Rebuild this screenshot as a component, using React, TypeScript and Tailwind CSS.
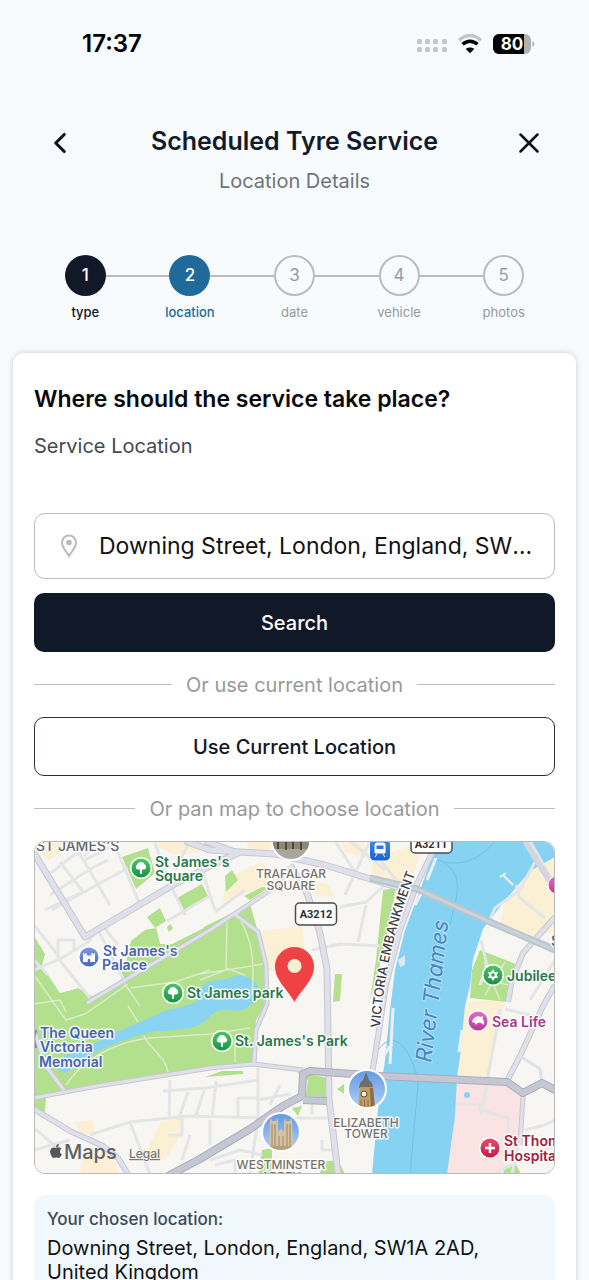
import { useState } from "react";
import { ChevronLeft, X } from "lucide-react";
import { FaApple } from "react-icons/fa";

const steps = ["type", "location", "date", "vehicle", "photos"];
const currentStep = 1;

const StatusBar = () => (
  <div className="flex h-[88px] items-center justify-between pl-[82px] pr-[54px]">
    <span className="text-[24px] font-semibold leading-7 text-black">17:37</span>
    <div className="flex items-center gap-[10px]">
      <svg width="30" height="16" viewBox="0 0 30 16" fill="#c3c5c7" aria-hidden="true">
        {[0, 8, 16, 25].map((x) => (
          <g key={x}>
            <rect x={x} y="3" width="5" height="5" rx="1.5" />
            <rect x={x} y="11" width="5" height="5" rx="1.5" />
          </g>
        ))}
      </svg>
      <svg width="26" height="20" viewBox="0 0 26 20" fill="none" aria-hidden="true">
        <path d="M2 6.2C8.5-.1 17.500-.1 24 6.200" stroke="#c3c5c7" strokeWidth="3.400" />
        <path d="M5.600 10.300C10 6.200 16 6.200 20.400 10.300" stroke="#000" strokeWidth="3.600" />
        <path d="M13 19.300 8.800 14.900C11 12.900 15 12.900 17.200 14.900Z" fill="#000" />
      </svg>
      <svg width="42" height="20" viewBox="0 0 42 20" aria-hidden="true">
        <rect x="0" y="0" width="38" height="20" rx="6" fill="#b0b1b3" />
        <path d="M6 0H31V20H6A6 6 0 0 1 0 14V6A6 6 0 0 1 6 0Z" fill="#000" />
        <path d="M39.500 7C42 8 42 12 39.500 13Z" fill="#b0b1b3" />
        <text x="19" y="16" textAnchor="middle" fill="#fff" fontSize="17" fontWeight="700">80</text>
      </svg>
    </div>
  </div>
);

const Header = () => (
  <header className="flex items-start justify-between px-[43px] pt-[38px]">
    <button type="button" aria-label="Back" className="text-[#0d1320]">
      <ChevronLeft size={34} strokeWidth={2.2} />
    </button>
    <div className="text-center">
      <h1 className="text-[25px] font-semibold leading-[30px] text-[#131a2a]">Scheduled Tyre Service</h1>
      <p className="mt-[13px] text-[20px] leading-6 text-[#6f737b]">Location Details</p>
    </div>
    <button type="button" aria-label="Close" className="text-[#0d1320]">
      <X size={34} strokeWidth={1.8} />
    </button>
  </header>
);

const Stepper = () => (
  <ol className="mx-[33px] mt-[62px] grid grid-cols-5">
    {steps.map((step, i) => {
      const circle =
        i < currentStep
          ? "bg-[#111827] text-white font-medium"
          : i === currentStep
            ? "bg-[#20699b] text-white font-medium"
            : "border-2 border-[#bbbbbd] text-[#98999b]";
      const label =
        i < currentStep ? "text-[#111827] font-medium" : i === currentStep ? "text-[#20699b] font-medium" : "text-[#98999b]";
      return (
        <li key={step} className="flex flex-col items-center">
          <div className="flex w-full items-center">
            <span className={i === 0 ? "h-[2px] flex-1" : "h-[2px] flex-1 bg-[#bbbbbd]"} />
            <span className={`flex size-[41px] items-center justify-center rounded-full text-[17px] ${circle}`}>{i + 1}</span>
            <span className={i === steps.length - 1 ? "h-[2px] flex-1" : "h-[2px] flex-1 bg-[#bbbbbd]"} />
          </div>
          <span className={`mt-[8px] text-[13px] leading-4 ${label}`}>{step}</span>
        </li>
      );
    })}
  </ol>
);

const Divider = ({ children }: { children: string }) => (
  <div className="flex h-[65px] items-center gap-[14px] text-[20px] leading-6 text-[#98999b]">
    <span className="h-px flex-1 bg-[#bcbdbf]" />
    {children}
    <span className="h-px flex-1 bg-[#bcbdbf]" />
  </div>
);

const TreeMarker = ({ x, y }: { x: number; y: number }) => (
  <g transform={`translate(${x} ${y})`}>
    <circle r="11" fill="#fff" />
    <circle r="9.500" fill="url(#poiGreen)" />
    <path d="M-1 5.800V1.500H-3.300A2.600 2.600 0 0 1-4-3.200A4.200 4.200 0 0 1 4-3.200A2.600 2.600 0 0 1 3.300 1.500H1V5.800Z" fill="#fff" />
  </g>
);

const LocationMap = () => (
  <svg
    className="block h-[331px] w-full bg-[#f7f6f3]"
    viewBox="35 842 519 331"
    preserveAspectRatio="xMidYMid slice"
    role="img"
    aria-label="Map of Westminster"
  >
    <defs>
      <linearGradient id="poiGreen" x2="0" y2="1">
        <stop stopColor="#4fc468" />
        <stop offset="1" stopColor="#169344" />
      </linearGradient>
      <linearGradient id="poiBlue" x2="0" y2="1">
        <stop stopColor="#7d9be0" />
        <stop offset="1" stopColor="#4a66bd" />
      </linearGradient>
      <linearGradient id="poiPink" x2="0" y2="1">
        <stop stopColor="#e06cc4" />
        <stop offset="1" stopColor="#b63a98" />
      </linearGradient>
      <linearGradient id="poiRed" x2="0" y2="1">
        <stop stopColor="#ee4a6a" />
        <stop offset="1" stopColor="#c01c48" />
      </linearGradient>
      <linearGradient id="station" x2="0" y2="1">
        <stop stopColor="#3f8df0" />
        <stop offset="1" stopColor="#1c5fd6" />
      </linearGradient>
      <linearGradient id="sky" x2="0" y2="1">
        <stop stopColor="#5f98e2" />
        <stop offset="1" stopColor="#b5d2f5" />
      </linearGradient>
      <path id="embankment" d="M380 1028C384 975 394 925 420 862" />
      <clipPath id="trafalgarClip"><circle cx="291" cy="841" r="18" /></clipPath>
      <clipPath id="towerClip"><circle cx="367" cy="1089" r="18" /></clipPath>
      <clipPath id="abbeyClip"><circle cx="281" cy="1132" r="18" /></clipPath>
    </defs>

    {/* commercial areas */}
    <g fill="#fcf0d4">
      <path d="M34 841H72L58 855 48 860 40 852 34 862ZM150 841H215L205 850 180 856 160 848ZM262 931 302 926 306 965 265 972ZM227 878 262 862 278 880 240 896 222 902ZM245 841H275L268 852 250 850ZM310 880 330 885 334 896 315 897ZM340 841H365V858L345 852ZM372 860 392 852 425 841 412 878 398 892 372 880ZM75 1122 93 1120 95 1135 80 1133ZM160 1122 185 1117 180 1135 165 1160 145 1155 152 1140ZM83 1155 110 1150 120 1174H80Z" />
      <path d="M530 868 555 854V930L530 940 500 924 505 903ZM465 1002 505 1000 497 1040 488 1076 458 1076Z" />
    </g>

    {/* hospital grounds */}
    <path d="M457 1080H508L522 1095 519 1140 500 1174H447Z" fill="#fae4e3" />

    {/* parks */}
    <g fill="#b3e08d">
      <path d="M34 936 45 954 42 966 60 993 78 988 92 996 122 981 131 941 145 930 156 928 160 940 175 942 210 924 250 904 258 932 265 952 266 1004 256 1020 252 1062 210 1068 120 1082 46 1097 45 1112 34 1108Z" />
      <path d="M122 857 148 848 155 873 136 889ZM147 917 160 908 166 921 155 928ZM177 898 202 884 208 896 184 910ZM225 876 232 870 238 880 226 892ZM262 887 268 888 250 900 244 896ZM335 974 342 974 340 1001 333 1002ZM383 890 396 888 390 920 384 950 370 1000 376 960Z" />
      <path d="M297 1072 328 1078 326 1097 306 1096 308 1080ZM222 1071H243V1074L205 1077ZM337 1089 344 1084V1094ZM262 1150 272 1148 272 1174H258ZM292 1108 302 1106 298 1116ZM322 1162 338 1160 345 1174H320ZM480 950 518 965 508 1002 470 998 472 970ZM505 1166 515 1162 521 1174H503Z" />
    </g>
    {/* lawns and buildings cut out of the palace gardens */}
    <path d="M92 996 122 981 160 960 205 936 210 924 175 942 131 965Z" fill="#b3e08d" />
    <path d="M78 950 100 935 118 962 122 981 92 996 78 988 60 993 45 966ZM157 930 163 925 168 934 180 927 186 920 200 922 204 928 172 944 160 944Z" fill="#f7f6f3" />
    <path d="M167 927 170 924 173 928 169 932Z" fill="#b3e08d" />

    {/* water */}
    <path d="M58 1071 64 1056 90 1046 112 1034 140 1022 165 1011 195 1003C200 998 200 985 207 983 215 978 222 982 232 977 240 974 250 977 256 983 262 992 256 1002 246 1008 236 1014 226 1008 217 1011 208 1016 207 1024 190 1028L165 1031C150 1030 135 1037 125 1040L105 1048 90 1055 66 1073Z" fill="#8ad3f3" />
    <path d="M438 841H555V857L530 871 503 903 483 929 473 959 470 986 465 1006 460 1056 457 1078 455 1116 447 1174H372L378 1110 385 1060 390 1010 395 970 405 930 420 890Z" fill="#86d2f2" />
    <g fill="none" stroke="#74c1e4" strokeWidth="1">
      <path d="M437 860C460 868 480 860 495 841M440 860C468 875 455 900 450 925M378 1050C400 1020 418 1070 418 1085L410 1174" />
    </g>
    <circle cx="467" cy="1095" r="3" fill="#8ad3f3" />

    {/* piers */}
    <g fill="none" stroke="#edf1f4" strokeWidth="3">
      <path d="M436 858 427 880M423 890 415 905M393 1008 390 1064M384 1055 392 1044M462 1030 459 1052" />
      <path d="M500 877 506 873M503 875 513 885" strokeWidth="2" />
    </g>
    <path d="M398 960 405 955V965L400 967Z" fill="#dfe8ec" />

    {/* footpaths inside the parks */}
    <g fill="none" stroke="#dcebcb" strokeWidth="1.500">
      <path d="M227 918 226 970 200 980M226 968 245 975M240 920C252 940 255 960 252 995M200 974 226 970 263 964M34 975 66 1020 85 1014 128 984M34 1004 60 1000 66 1012M130 988 175 982 210 970M122 980 140 1006M128 1006 138 1022M144 1036C150 1050 165 1055 168 1072M66 1085C90 1050 130 1040 150 1038L210 1034 250 1028M235 1045V1062M480 980 510 985M484 962 500 1000M505 962 485 995" />
    </g>

    {/* minor streets */}
    <g fill="none" stroke="#e3e5e7" strokeWidth="3" strokeLinejoin="round">
      <path d="M44 878 78 852M50 895 92 868M52 910 100 883M72 841 110 905M98 841 84 856M60 862 84 893M92 868 108 860M100 883 128 868M110 905 104 895M116 848 140 905M85 860 112 846M45 910 80 893" />
      <path d="M166 875 185 915M190 841 175 870M155 843 166 875M173 883 205 870M200 865 215 910M215 912 245 890M167 921 210 896M34 970 62 958 88 942 98 930M58 958 90 998M98 930 124 980M58 958V940H74V950M103 926 118 945M34 960 48 975M34 925 60 958" />
      <path d="M312 950 340 944 380 946M366 905 358 942M340 907 366 902 385 885M370 841 345 895M335 841 360 880M350 841 385 870M376 855 396 880" />
      <path d="M170 1080 169 1118M90 1135 130 1122 190 1116 262 1118M163 1091 205 1088 258 1080M188 1092 178 1120M205 1088 195 1118M168 1135H182V1118M182 1160 190 1135M34 1128 60 1150M34 1150 70 1140M130 1122 150 1174M210 1120V1145M216 1081 212 1118M258 1068V1118L250 1174M238 1118V1098H258M258 1100 290 1094M270 1105 280 1085M210 1160 240 1150 262 1155M215 1165 235 1160V1174M262 1118 330 1118M312 1115V1100M322 1140V1150H335" />
      <path d="M481 940 487 965 480 985M489 922 555 946M489 922 495 908 520 890 535 862M516 885 520 898 545 918M530 841 555 885M500 1009 488 1076 481 1115M457 1104H480V1110L508 1118V1150M505 1009 540 1018M525 1130 545 1125 555 1120M520 1138 512 1174M545 1150 555 1145M530 1000 555 960M495 1174 520 1160" />
    </g>

    {/* main roads: casing, then fill */}
    <g fill="none" strokeLinejoin="round">
      <g stroke="#c6c8d3" strokeWidth="7">
        <path d="M34 853 85 937 173 885 210 866 240 852 275 854 325 865 400 888M185 841 210 850 240 852M205 841 235 852M290 865 307 893 320 933 327 969 329 1099 338 1174" />
        <path d="M34 1109 70 1131 103 1146 118 1158 128 1174M438 841 417 884 400 930 386 985 379 1030 372 1074M508 1079 520 1056 543 1006 555 985M508 1002 512 980 523 953 555 917" strokeWidth="6" />
        <path d="M87 1003 127 979 210 930 263 895 285 880M34 1098 97 1086 210 1068 253 1064 303 1070M233 913 258 932 266 965 267 1004 256 1030 254 1064M34 1030 45 1065 64 1090M523 1096 520 1145" strokeWidth="5" />
      </g>
      <g stroke="#dfe0e9" strokeWidth="5">
        <path d="M34 853 85 937 173 885 210 866 240 852 275 854 325 865 400 888M185 841 210 850 240 852M205 841 235 852M290 865 307 893 320 933 327 969 329 1099 338 1174" />
        <path d="M34 1109 70 1131 103 1146 118 1158 128 1174M438 841 417 884 400 930 386 985 379 1030 372 1074M508 1079 520 1056 543 1006 555 985M508 1002 512 980 523 953 555 917" strokeWidth="4" />
        <path d="M87 1003 127 979 210 930 263 895 285 880M34 1098 97 1086 210 1068 253 1064 303 1070M233 913 258 932 266 965 267 1004 256 1030 254 1064M34 1030 45 1065 64 1090M520 1056 540 1069 542 1083M523 1096 520 1145" strokeWidth="3" />
      </g>
      <path d="M370 878 417 889 490 922 555 950" stroke="#b9c6cf" strokeWidth="7" />
      <path d="M370 878 417 889 490 922 555 950" stroke="#cbd3d9" strokeWidth="3" />
      <path d="M525 841 555 890" stroke="#d3d6df" strokeWidth="6" />
      <g stroke="#a9acba" strokeWidth="8">
        <path d="M168 1176 200 1159 250 1129 283 1106 302 1096 303 1074 310 1071 353 1074 380 1076 507 1082 523 1093 542 1083 557 1091M303 1100 327 1101" />
      </g>
      <g stroke="#c5c8d3" strokeWidth="6">
        <path d="M168 1176 200 1159 250 1129 283 1106 302 1096 303 1074 310 1071 353 1074 380 1076 507 1082 523 1093 542 1083 557 1091M303 1100 327 1101" />
      </g>
    </g>

    {/* road shields */}
    <g fill="#fff" stroke="#4b4b4f" strokeWidth="1.500">
      <rect x="295.500" y="903" width="41" height="22" rx="4" />
      <rect x="411" y="831" width="41" height="22" rx="4" />
    </g>
    <g fill="#2f2f33" fontSize="11" fontWeight="700" textAnchor="middle" fontFamily="Roboto, sans-serif">
      <text x="316" y="918">A3212</text>
      <text x="431" y="848">A3211</text>
    </g>

    {/* photo markers */}
    <circle cx="291" cy="841" r="20" fill="#fff" />
    <g clipPath="url(#trafalgarClip)">
      <path d="M270 820H312V850H270Z" fill="#5d6a4d" />
      <path d="M272 841H310V849H272Z" fill="#8b8675" />
      <path d="M272 849H310V862H272Z" fill="#a9a69b" />
      <path d="M278 841V849M286 841V850M293 839V849M301 841V850" stroke="#4a4c3b" strokeWidth="2" />
    </g>
    <circle cx="367" cy="1089" r="20" fill="#fff" />
    <g clipPath="url(#towerClip)">
      <path d="M347 1069H387V1109H347Z" fill="url(#sky)" />
      <path d="M366 1072 369 1080 372 1083 373 1088H359L360 1083 363 1080Z" fill="#6d6e6d" />
      <path d="M360 1087H373L375 1109H358Z" fill="#c19c65" />
      <path d="M370 1088H373L375 1109H371Z" fill="#8c6c43" />
      <circle cx="364" cy="1094" r="3" fill="#f5ecd7" stroke="#5e4b32" />
      <path d="M361 1100V1109M364.500 1100V1109M368 1100V1109" stroke="#94733f" />
    </g>
    <circle cx="281" cy="1132" r="20" fill="#fff" />
    <g clipPath="url(#abbeyClip)">
      <path d="M261 1112H301V1152H261Z" fill="url(#sky)" />
      <path d="M269 1149 270 1120 271 1118 272 1121H276L277 1118 278 1121V1132L281 1129 284 1132V1121L285 1118 286 1121H290L291 1118 292 1120 293 1149Z" fill="#d6c1a1" />
      <path d="M272 1124V1147M275 1124V1147M287 1124V1147M290 1124V1147M279 1136V1147M283 1136V1147" stroke="#9d8667" />
      <path d="M267 1146H295V1152H267Z" fill="#b79e7b" />
    </g>

    {/* points of interest */}
    <TreeMarker x={141} y={868} />
    <TreeMarker x={173} y={993} />
    <TreeMarker x={222} y={1041} />
    <g transform="translate(493 975)">
      <circle r="11" fill="#fff" />
      <circle r="9.500" fill="url(#poiGreen)" />
      <path d="M0-6 1.800-3 5.200-3 3.600 0 5.200 3H1.800L0 6-1.800 3H-5.200L-3.600 0-5.200-3H-1.800Z" fill="#fff" />
      <circle r="1.800" fill="#2fa853" />
    </g>
    <g transform="translate(89 957)">
      <circle r="11" fill="#fff" />
      <circle r="9.500" fill="url(#poiBlue)" />
      <path d="M-6 5V-4H-4.700V-2.500H-3.600V-4H-2.300V0H-1.800V-2H-.6V-1H.6V-2H1.800V0H2.300V-4H3.600V-2.500H4.700V-4H6V5H1.300V3A1.300 1.300 0 0 0-1.300 3V5Z" fill="#fff" />
    </g>
    <g transform="translate(478 1021)">
      <circle r="11" fill="#fff" />
      <circle r="9.500" fill="url(#poiPink)" />
      <path d="M-6 1C-5-4 0-6 3-4L5-5 4.500-2C6.500 0 6.500 2 5.500 4 4 2 2 1.500-.5 2L-2 4-3 2Z" fill="#fff" />
    </g>
    <g transform="translate(490 1148)">
      <circle r="11" fill="#fff" />
      <circle r="9.500" fill="url(#poiRed)" />
      <path d="M0-5V5M-5 0H5" stroke="#fff" strokeWidth="2.500" />
    </g>
    <circle cx="557" cy="885" r="9" fill="url(#poiPink)" stroke="#fff" />
    <rect x="369.500" y="839" width="21" height="22" rx="5" fill="url(#station)" stroke="#fff" />
    <path d="M377 843H383A2 2 0 0 1 385 845V853H375V845A2 2 0 0 1 377 843ZM377 854 375 857M383 854 385 857" fill="#fff" stroke="#fff" />
    <path d="M376.500 845.500H383.500V849H376.500Z" fill="#2f74e2" />
    <path d="M36 1030C33 1036 33 1042 36 1048" stroke="#6d8bd6" strokeWidth="3" fill="none" />

    {/* labels */}
    <g paintOrder="stroke" stroke="#fff" strokeWidth="3" strokeLinejoin="round" strokeOpacity=".85">
      <g fontSize="14" fontWeight="600">
        <g fill="#26794a">
          <text x="155" y="867">St James's</text>
          <text x="155" y="881">Square</text>
          <text x="187" y="998">St James park</text>
          <text x="235" y="1046">St. James's Park</text>
          <text x="507" y="981">Jubilee Gardens</text>
        </g>
        <g fill="#4862b0">
          <text x="103" y="956">St James's</text>
          <text x="102" y="970">Palace</text>
          <text x="40" y="1038">The Queen</text>
          <text x="40" y="1052">Victoria</text>
          <text x="39" y="1067">Memorial</text>
        </g>
        <text x="492" y="1027" fill="#a8388b">Sea Life</text>
        <text x="504" y="1146" fill="#a22039">St Thomas'</text>
        <text x="504" y="1161" fill="#a22039">Hospital</text>
      </g>
      <g fontSize="12" fontWeight="500" fill="#77716a" textAnchor="middle">
        <text x="291" y="878">TRAFALGAR</text>
        <text x="291" y="890">SQUARE</text>
        <text x="366" y="1127">ELIZABETH</text>
        <text x="366" y="1138">TOWER</text>
        <text x="281" y="1169">WESTMINSTER</text>
        <text x="281" y="1181">ABBEY</text>
      </g>
      <text x="36" y="851" fontSize="14" fontWeight="500" fill="#63666c">ST JAMES'S</text>
      <text fontSize="13" fontWeight="500" fill="#3e4047">
        <textPath href="#embankment">VICTORIA EMBANKMENT</textPath>
      </text>
      <text x="551" y="946" fontSize="14" fontWeight="500" fill="#55575d">S</text>
    </g>
    <text transform="translate(431 1063) rotate(-83)" fontSize="22" fontStyle="italic" fill="#4687c2" stroke="#b6e1f5" strokeWidth="2" paintOrder="stroke">
      River Thames
    </text>

    {/* attribution */}
    <FaApple x="48" y="1143" size={16} color="#55565a" />
    <text x="64" y="1159" fontSize="20" fontWeight="500" fill="#606165">Maps</text>
    <text x="129" y="1158" fontSize="12" fontWeight="500" fill="#77787c" textDecoration="underline">Legal</text>

    {/* chosen position */}
    <path d="M294.500 1002C287 989 275 980 275 966.500A19.500 19.500 0 0 1 314 966.500C314 980 302 989 294.500 1002Z" fill="#ee4244" />
    <circle cx="294.500" cy="966" r="7" fill="#faefd0" />
  </svg>
);

const App = () => {
  const [address, setAddress] = useState("Downing Street, London, England, SW1A 2AD, United Kingdom");

  return (
    <div className="h-screen overflow-hidden bg-[#f7fbfd] font-['Inter',sans-serif]">
      <StatusBar />
      <Header />
      <Stepper />

      <main className="mx-[13px] mt-[33px] min-h-screen rounded-[11px] bg-white px-[21px] pt-[31px] shadow-[0_0_6px_rgba(0,0,0,0.18)]">
        <h2 className="text-[23px] font-semibold leading-[30px] text-[#0a0a0b]">Where should the service take place?</h2>
        <label htmlFor="address" className="mt-[20px] block text-[20px] leading-6 text-[#414857]">
          Service Location
        </label>

        <div className="mt-[55px] flex h-[66px] items-center gap-[21px] rounded-[11px] border border-[#bcbdbf] pl-[25px] pr-[20px]">
          <svg width="18" height="24" viewBox="0 0 18 24" fill="none" className="shrink-0" aria-hidden="true">
            <path d="M9 22C7 18 2 14 2 8.500A7 7 0 0 1 16 8.500C16 14 11 18 9 22Z" stroke="#b9babc" strokeWidth="2" />
            <circle cx="9" cy="8.500" r="2.800" fill="#b9babc" />
          </svg>
          <input
            id="address"
            value={address}
            onChange={(e) => setAddress(e.target.value)}
            className="min-w-0 flex-1 text-ellipsis bg-transparent text-[23px] leading-7 text-[#111214] outline-none"
          />
        </div>
        <button type="button" className="mt-[14px] h-[59px] w-full rounded-[10px] bg-[#111827] text-[20px] font-medium leading-6 text-white">
          Search
        </button>

        <Divider>Or use current location</Divider>
        <button type="button" className="block h-[59px] w-full rounded-[10px] border border-[#2a2e38] text-[20px] font-medium leading-6 text-[#111827]">
          Use Current Location
        </button>
        <Divider>Or pan map to choose location</Divider>

        <div className="overflow-hidden rounded-[11px] border border-[#b9babc]">
          <LocationMap />
        </div>

        <section className="mt-[21px] rounded-[11px] bg-[#f0f8fe] px-[13px] pb-[14px] pt-[12px]">
          <p className="text-[17px] font-medium leading-6 text-[#414857]">Your chosen location:</p>
          <p className="mt-[5px] text-[20px] leading-6 text-[#111214]">
            Downing Street, London, England, SW1A 2AD, United Kingdom
          </p>
        </section>
      </main>
    </div>
  );
};

export default App;
